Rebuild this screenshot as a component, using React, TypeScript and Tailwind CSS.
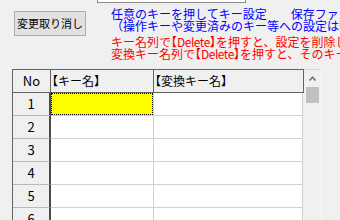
const rows = [1, 2, 3, 4, 5, 6, 7];

function Br({ children }: { children: string }) {
  return <span className="[font-feature-settings:'halt']">{children}</span>;
}

export default function App() {
  return (
    <div className="flex h-[220px] w-[340px] flex-col overflow-hidden bg-[#f0f0f0] font-[family-name:'Noto_Sans_CJK_JP',sans-serif] text-[12px] text-black">
      <div className="ml-[97px] h-[3px] w-[149px] shrink-0 border-x border-b border-[#8a8a8a] bg-white" />

      <div className="flex shrink-0">
        <button className="ml-[14px] mt-[8px] h-[25px] w-[72px] shrink-0 border border-[#adadad] bg-[#e1e1e1] text-[11px] leading-none">
          変更取り消し
        </button>
        <div className="ml-[25px] mt-[5px] whitespace-nowrap leading-[12px]">
          <div className="text-[#0000ff]">
            <p>任意のキーを押してキー設定　　保存ファイル</p>
            <p>（操作キーや変更済みのキー等への設定は無効）</p>
          </div>
          <div className="mt-[4px] text-[#ff0000]">
            <p>
              キー名列で<Br>【</Br>
              <span className="tracking-[-0.5px]">Delete</span>
              <Br>】</Br>を押すと、設定を削除します
            </p>
            <p>
              変換キー名列で<Br>【</Br>
              <span className="tracking-[-0.5px]">Delete</span>
              <Br>】</Br>を押すと、そのキーの設定を削除
            </p>
          </div>
        </div>
      </div>

      <div className="ml-[12px] mt-[9px] flex min-h-0 flex-1">
        <div className="w-[292px] border-l border-t border-[#646464]">
          <div className="flex h-[23px] border-b border-[#646464] bg-[#f0f0f0] leading-[22px]">
            <div className="w-[38px] border-r border-[#646464] text-center text-[13px]">No</div>
            <div className="w-[103px] border-r border-[#646464] pl-px">
              <Br>【</Br>キー名<Br>】</Br>
            </div>
            <div className="w-[150px] border-r border-[#646464] pl-px">
              <Br>【</Br>変換キー名<Br>】</Br>
            </div>
          </div>
          {rows.map((n) => (
            <div key={n} className="flex h-[23px]">
              <div className="w-[38px] border-b border-r-2 border-b-[#b9b9b9] border-r-[#4a4a4a] bg-[#f0f0f0] text-center text-[13px] leading-[22px]">
                {n}
              </div>
              <div className="w-[103px] border-b border-r border-[#d0d0d0] bg-white">
                {n === 1 && <div className="h-full border border-dotted border-black bg-[#ffff00]" />}
              </div>
              <div className="w-[149px] border-b border-r border-[#d0d0d0] bg-white" />
            </div>
          ))}
        </div>

        <div className="flex w-[17px] flex-col items-center border-t border-[#d9d9d9] bg-[#f0f0f0]">
          <div className="flex h-[17px] w-full items-center justify-center">
            <svg width="7" height="5" viewBox="0 0 7 5" fill="none">
              <path d="M0.5 4.5 L3.5 1.2 L6.5 4.5" stroke="#606060" strokeWidth="1.3" />
            </svg>
          </div>
          <div className="h-[16px] w-[13px] bg-[#c1c1c1]" />
        </div>
        <div className="w-px bg-[#fafafa]" />
      </div>
    </div>
  );
}
